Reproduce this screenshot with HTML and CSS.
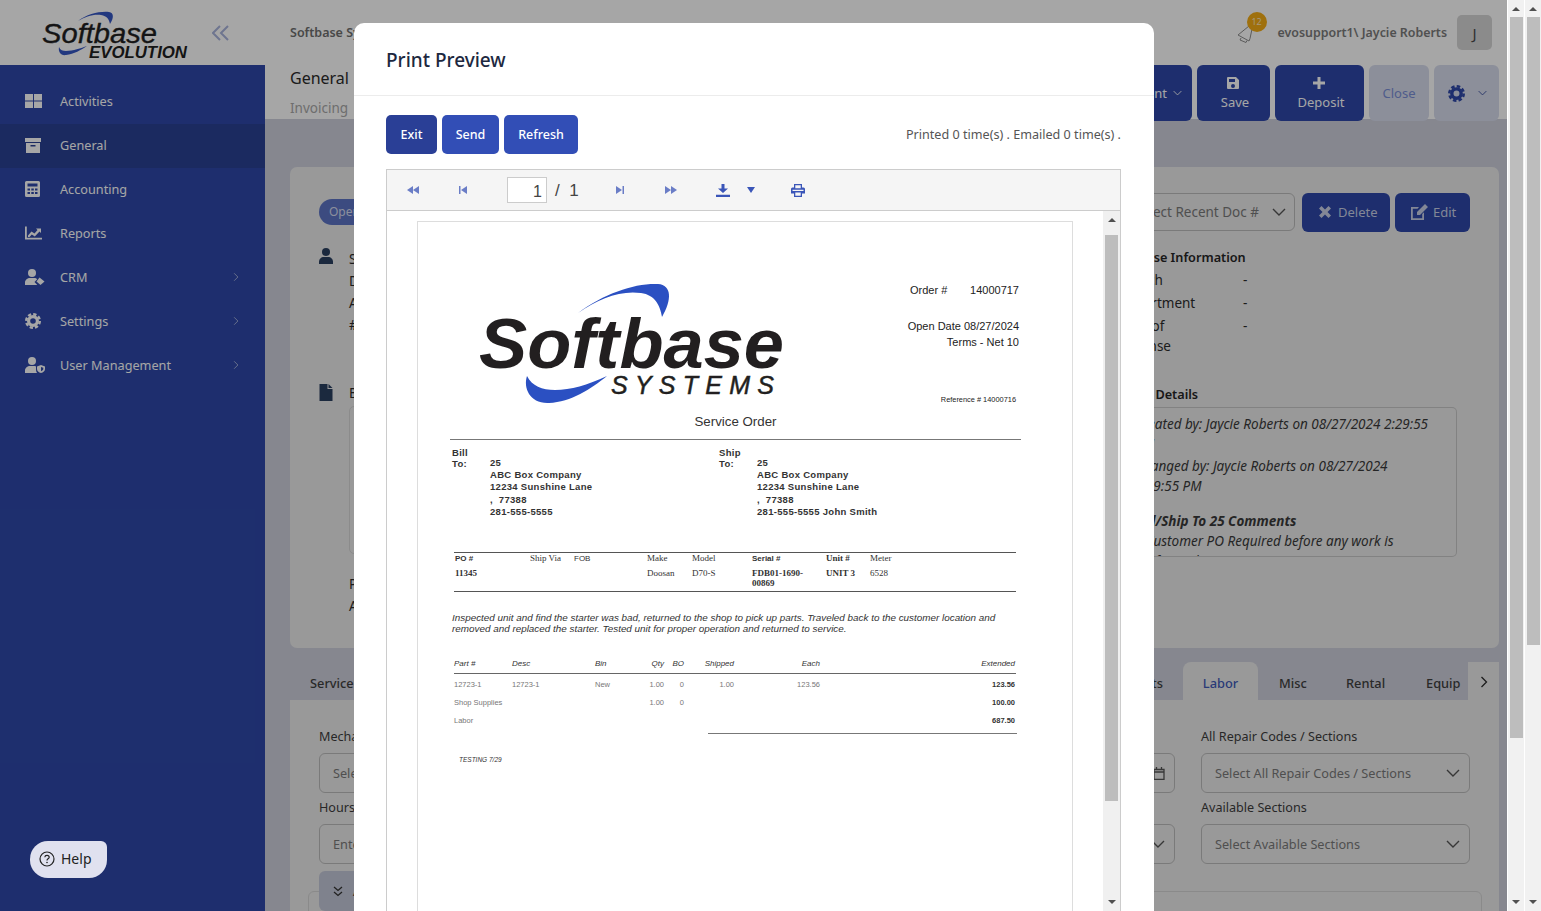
FILE: index.html
```html
<!DOCTYPE html>
<html lang="en">
<head>
<meta charset="utf-8">
<title>Softbase Evolution - Print Preview</title>
<link rel="stylesheet" href="styles.css">
</head>
<body>
<svg class="defs" aria-hidden="true">
  <defs>
    <symbol id="i-grid" viewBox="0 0 17 14"><path d="M0 0h8v6.500H0zM9 0h8v6.500H9zM0 7.500h8V14H0zM9 7.500h8V14H9z"/></symbol>
    <symbol id="i-archive" viewBox="0 0 16 15"><path d="M0 0h16v4H0zM1 5h14v10H1zM5.500 7v1.400h5V7z" fill-rule="evenodd"/></symbol>
    <symbol id="i-calc" viewBox="0 0 15 16"><path fill-rule="evenodd" d="M1.500 0h12A1.500 1.500 0 0 1 15 1.500v13a1.500 1.500 0 0 1-1.500 1.500h-12A1.500 1.500 0 0 1 0 14.500v-13A1.500 1.500 0 0 1 1.500 0zM2.500 2.500v3h10v-3zM2.500 7.500v2h2.500v-2zM6.300 7.500v2h2.500v-2zM10 7.500v2h2.500v-2zM2.500 11v2h2.500v-2zM6.300 11v2h2.500v-2zM10 11v2h2.500v-2z"/></symbol>
    <symbol id="i-chart" viewBox="0 0 17 13"><path d="M0 0h1.800v11.200H17V13H0zM3 9l3.500-4 3 2 3-3.500-1.500-1.500H16v4.500l-1.500-1.500L9.800 10 6.800 8 4.500 10.500H3z"/></symbol>
    <symbol id="i-crm" viewBox="0 0 20 16"><circle cx="7" cy="4" r="4"/><path d="M0 16v-2.500C0 11 2.500 9 5 9h4c1.500 0 2.500.5 3.200 1.300L9.500 13l2.800 3z"/><path d="M14.500 8.500l5 4-4 3.500-4-3.500z"/></symbol>
    <symbol id="i-gear" viewBox="0 0 16 16"><circle cx="8" cy="8" r="4.400" fill="none" stroke="currentColor" stroke-width="3.200"/><circle cx="8" cy="8" r="6.800" fill="none" stroke="currentColor" stroke-width="2.400" stroke-dasharray="3.300 2.040"/></symbol>
    <symbol id="i-ushield" viewBox="0 0 20 16"><circle cx="7" cy="4" r="4"/><path d="M0 16v-2.500C0 11 2.500 9 5 9h4c.8 0 1.500.2 2 .4V13c0 1.100.4 2.200 1 3z"/><path fill-rule="evenodd" d="M16 8l4 1.500V12c0 2-1.700 3.500-4 4-2.300-.5-4-2-4-4V9.500zM16 10v4.200c1.300-.4 2.300-1.200 2.300-2.200v-1.300z"/></symbol>
    <symbol id="i-chev" viewBox="0 0 8 12"><path d="M1.500 1l5 5-5 5" fill="none" stroke="currentColor" stroke-width="1.300"/></symbol>
    <symbol id="i-down" viewBox="0 0 14 8"><path d="M1 1l6 6 6-6" fill="none" stroke="currentColor" stroke-width="1.400"/></symbol>
  </defs>
</svg>

<div class="screen">
  <div class="app">
    <aside class="sidebar">
      <div class="brand">
        <svg class="brand-logo" viewBox="0 0 145 50" role="img" aria-label="Softbase Evolution">
          <path class="sw" d="M36 10C45 3 58 0 67 1c5 .6 5 6 1 12-1-5-3-8-9-9C51 3 43 6 36 10z"/>
          <path class="sw" d="M17 36c-1 5 2 9 7 8 8-1 15-5 21-9-6 2-14 5-21 5-3 0-6-1-7-4z"/>
          <text class="brand-word" x="0" y="32" textLength="115" lengthAdjust="spacingAndGlyphs">Softbase</text>
          <text class="brand-evo" x="47" y="47" textLength="98" lengthAdjust="spacingAndGlyphs">EVOLUTION</text>
        </svg>
        <svg class="collapse" viewBox="0 0 18 16"><path d="M8 1L1 8l7 7M16 1L9 8l7 7" fill="none" stroke="currentColor" stroke-width="2"/></svg>
      </div>
      <nav class="nav">
        <a class="nav-item"><svg class="nav-icon"><use href="#i-grid"/></svg><span>Activities</span></a>
        <a class="nav-item active"><svg class="nav-icon ic-archive"><use href="#i-archive"/></svg><span>General</span></a>
        <a class="nav-item"><svg class="nav-icon ic-calc"><use href="#i-calc"/></svg><span>Accounting</span></a>
        <a class="nav-item"><svg class="nav-icon"><use href="#i-chart"/></svg><span>Reports</span></a>
        <a class="nav-item"><svg class="nav-icon ic-wide"><use href="#i-crm"/></svg><span>CRM</span><svg class="nav-chev"><use href="#i-chev"/></svg></a>
        <a class="nav-item"><svg class="nav-icon ic-gear"><use href="#i-gear"/></svg><span>Settings</span><svg class="nav-chev"><use href="#i-chev"/></svg></a>
        <a class="nav-item"><svg class="nav-icon ic-wide"><use href="#i-ushield"/></svg><span>User Management</span><svg class="nav-chev"><use href="#i-chev"/></svg></a>
      </nav>
    </aside>

    <main class="main">
      <header class="topbar">
        <span class="company">Softbase Systems</span>
        <div class="user">
          <span class="bell">
            <svg class="bell-icon" viewBox="0 0 20 18"><path d="M12 1L1 10l11 6 1-2.500L15 4zM4 13l-1 2 6 2.500 1-2" fill="none" stroke="currentColor"/></svg>
            <b class="bell-count">12</b>
          </span>
          <span class="user-name">evosupport1\ Jaycie Roberts</span>
          <span class="avatar">J</span>
        </div>
      </header>
      <div class="subbar">
        <div class="crumbs"><div class="crumb-title">General</div><div class="crumb-sub">Invoicing</div></div>
        <div class="actions">
          <button class="act act-print">Print <svg class="act-chev"><use href="#i-down"/></svg></button>
          <button class="act act-save">
            <svg class="act-icon" viewBox="0 0 14 14"><path fill-rule="evenodd" d="M2 1h8l3 3v8a1 1 0 0 1-1 1H2a1 1 0 0 1-1-1V2a1 1 0 0 1 1-1zM3 3v3h6V3zM7 8a2 2 0 1 0 0 4 2 2 0 0 0 0-4z"/></svg>
            Save</button>
          <button class="act act-deposit">
            <svg class="act-icon" viewBox="0 0 14 14"><path d="M5.500 1h3v4.500H13v3H8.500V13h-3V8.500H1v-3h4.500z"/></svg>
            Deposit</button>
          <button class="act act-close">Close</button>
          <button class="act act-gear"><svg class="gear-icon"><use href="#i-gear"/></svg><svg class="act-chev"><use href="#i-down"/></svg></button>
        </div>
      </div>

      <div class="content">
        <section class="card">
          <div class="card-left">
            <span class="pill">Open</span>
            <div class="party">
              <svg class="party-icon" viewBox="0 0 14 16"><circle cx="7" cy="4" r="4"/><path d="M0 16v-2c0-3 2-5 5-5h4c3 0 5 2 5 5v2z"/></svg>
              <div class="party-text"><p>Ship To</p><p>Dept</p><p>Address</p><p>#25</p></div>
            </div>
            <div class="party party-bill">
              <svg class="party-icon file" viewBox="0 0 13 17"><path d="M0 0h8v5h5v12H0zM9 0l4 4H9z"/></svg>
              <div class="party-text"><p>Bill To</p></div>
            </div>
            <div class="bill-box"></div>
            <div class="party-text po"><p>PO</p><p>Address</p></div>
          </div>
          <div class="card-right">
            <div class="recent">
              <div class="select recent-select"><span>Select Recent Doc #</span><svg class="sel-chev"><use href="#i-down"/></svg></div>
              <button class="btn-solid btn-delete"><svg class="btn-icon" viewBox="0 0 14 14"><path d="M1 3.500L3.500 1 7 4.500 10.500 1 13 3.500 9.500 7 13 10.500 10.500 13 7 9.500 3.500 13 1 10.500 4.500 7z"/></svg>Delete</button>
              <button class="btn-solid btn-edit"><svg class="btn-icon edit" viewBox="0 0 18 16"><path d="M1 3h8L7.500 4.800H2.800v9.400h9.400V10L14 8.300V16H1zM15 0l3 3-8 8H7V8z"/></svg>Edit</button>
            </div>
            <h4 class="info-title">Expense Information</h4>
            <dl class="info">
              <dt>Branch</dt><dd>-</dd>
              <dt>Department</dt><dd>-</dd>
              <dt>Type of<br>Expense</dt><dd>-</dd>
            </dl>
            <h4 class="info-title details-title">Order Details</h4>
            <div class="details">
              <p class="d-first">Created by: Jaycie Roberts on 08/27/2024 2:29:55<br>PM</p>
              <p>Changed by: Jaycie Roberts on 08/27/2024<br>2:29:55 PM</p>
              <p><b>Bill/Ship To 25 Comments</b><br>&nbsp;&nbsp;&nbsp;Customer PO Required before any work is<br>performed</p>
            </div>
          </div>
        </section>

        <div class="tabs">
          <span class="tab tab-service">Service</span>
          <span class="tab tab-parts">Parts</span>
          <span class="tab tab-active">Labor</span>
          <span class="tab tab-misc">Misc</span>
          <span class="tab tab-rental">Rental</span>
          <span class="tab tab-equip">Equip</span>
          <span class="tab-next"><svg class="tab-next-icon"><use href="#i-chev"/></svg></span>
        </div>
        <section class="panel">
          <div class="form-grid">
            <label class="field"><span>Mechanic</span><div class="select"><span>Select Mechanic</span></div></label>
            <label class="field"><span>Date</span><div class="select select-date"><span>Select Date</span>
              <svg class="cal" viewBox="0 0 12 13"><path d="M1 2.500h10v10H1zM1 5h10M3.500 0v3M8.500 0v3" fill="none" stroke="currentColor" stroke-width="1.300"/></svg></div></label>
            <label class="field"><span>All Repair Codes / Sections</span><div class="select"><span>Select All Repair Codes / Sections</span><svg class="sel-chev"><use href="#i-down"/></svg></div></label>
            <label class="field"><span>Hours</span><div class="select"><span>Enter Hours</span></div></label>
            <label class="field"><span>Rate</span><div class="select"><span>Select Rate</span><svg class="sel-chev"><use href="#i-down"/></svg></div></label>
            <label class="field"><span>Available Sections</span><div class="select"><span>Select Available Sections</span><svg class="sel-chev"><use href="#i-down"/></svg></div></label>
          </div>
          <div class="accordion">
            <div class="acc-box"></div>
            <div class="acc-chip"><svg class="acc-icon" viewBox="0 0 10 11"><path d="M1 1l4 3.500L9 1M1 6l4 3.500L9 6" fill="none" stroke="currentColor" stroke-width="1.300"/></svg><span>Add</span></div>
          </div>
        </section>
      </div>
    </main>

    <div class="backdrop"></div>

    <button class="help">
      <svg class="help-icon" viewBox="0 0 16 16"><circle cx="8" cy="8" r="7" fill="none" stroke="currentColor" stroke-width="1.200"/><path d="M5.800 6.200C5.900 4.900 6.900 4.300 8 4.300c1.200 0 2.200.8 2.200 1.900 0 1.600-2.200 1.600-2.200 3.200" fill="none" stroke="currentColor" stroke-width="1.200"/><circle cx="8" cy="11.500" r=".8" fill="currentColor"/></svg>
      Help
    </button>

    <div class="modal" role="dialog" aria-label="Print Preview">
      <div class="modal-head"><h2 class="modal-title">Print Preview</h2></div>
      <div class="modal-body">
        <div class="modal-actions">
          <button class="m-btn m-exit">Exit</button>
          <button class="m-btn m-send">Send</button>
          <button class="m-btn m-refresh">Refresh</button>
          <span class="print-count">Printed 0 time(s) . Emailed 0 time(s) .</span>
        </div>
        <div class="viewer">
          <div class="toolbar">
            <svg class="tb-icon" viewBox="0 0 12 8"><path d="M6 0v8L0 4zM12 0v8L6 4z"/></svg>
            <svg class="tb-icon small" viewBox="0 0 8 8"><path d="M0 0h1.500v8H0zM8 0v8L2 4z"/></svg>
            <input class="page-input" value="1" aria-label="Page">
            <span class="page-total">/&nbsp;&nbsp;1</span>
            <svg class="tb-icon small" viewBox="0 0 8 8"><path d="M0 0v8l6-4zM6.500 0H8v8H6.500z"/></svg>
            <svg class="tb-icon" viewBox="0 0 12 8"><path d="M0 0v8l6-4zM6 0v8l6-4z"/></svg>
            <svg class="tb-dl" viewBox="0 0 14 13"><path d="M5.500 0h3v4.500H12L7 9 2 4.500h3.500zM0 10.800h14V13H0z"/></svg>
            <svg class="tb-caret" viewBox="0 0 8 6"><path d="M0 0h8L4 6z"/></svg>
            <svg class="tb-print" viewBox="0 0 14 13"><path fill-rule="evenodd" d="M3 0h8v3.500h1.500A1.500 1.500 0 0 1 14 5v4.500h-3V13H3V9.500H0V5a1.500 1.500 0 0 1 1.500-1.500H3zM4.300 1.300v3h5.400v-3zM1.500 5.800v1.200h11V5.800zM4.300 8.500v3.300h5.400V8.500z"/></svg>
          </div>
          <div class="viewer-body">
            <article class="doc">
              <div class="doc-head">
                <svg class="doc-logo" viewBox="0 0 303 124" role="img" aria-label="Softbase Systems">
                  <path class="doc-sw" d="M98 29C125 9 155-1 178 0c14 1 14 16 4 33-2-12-7-22-21-24C140 6 118 15 98 29z"/>
                  <path class="doc-sw" d="M47 92c-4 12 3 28 22 27 22-1 42-14 58-27-20 9-36 14-52 14-13 0-23-4-28-14z"/>
                  <text class="doc-word" x="-1" y="84" textLength="305" lengthAdjust="spacingAndGlyphs">Softbase</text>
                  <text class="doc-systems" x="131" y="110" textLength="163" lengthAdjust="spacing">SYSTEMS</text>
                </svg>
                <div class="doc-meta">
                  <div class="meta-order"><span>Order #</span><span>14000717</span></div>
                  <div class="meta-open">Open Date 08/27/2024</div>
                  <div class="meta-terms">Terms - Net 10</div>
                  <div class="meta-ref">Reference # 14000716</div>
                </div>
              </div>
              <h3 class="doc-title">Service Order</h3>
              <div class="addr-row">
                <div class="addr">
                  <div class="addr-label">Bill To:</div>
                  <div class="addr-lines">25<br>ABC Box Company<br>12234 Sunshine Lane<br>,&nbsp; 77388<br>281-555-5555</div>
                </div>
                <div class="addr">
                  <div class="addr-label">Ship To:</div>
                  <div class="addr-lines">25<br>ABC Box Company<br>12234 Sunshine Lane<br>,&nbsp; 77388<br>281-555-5555 John Smith</div>
                </div>
              </div>
              <div class="unit-table">
                <span class="u-sans">PO #</span><span class="u-serif">Ship Via</span><span class="u-sans u-light">FOB</span><span class="u-serif">Make</span><span class="u-serif">Model</span><span class="u-sans">Serial #</span><span class="u-serif u-bold">Unit #</span><span class="u-serif">Meter</span>
                <span class="u-serif u-bold">11345</span><span></span><span></span><span class="u-serif">Doosan</span><span class="u-serif">D70-S</span><span class="u-serif u-bold">FDB01-1690-<br>00869</span><span class="u-serif u-bold">UNIT 3</span><span class="u-serif">6528</span>
              </div>
              <p class="doc-note">Inspected unit and find the starter was bad, returned to the shop to pick up parts. Traveled back to the customer location and<br>removed and replaced the starter. Tested unit for proper operation and returned to service.</p>
              <div class="parts">
                <div class="parts-row parts-head"><span>Part #</span><span>Desc</span><span>Bin</span><span class="r">Qty</span><span class="r">BO</span><span class="r">Shipped</span><span class="r">Each</span><span class="r">Extended</span></div>
                <div class="parts-row"><span>12723-1</span><span>12723-1</span><span>New</span><span class="r">1.00</span><span class="r">0</span><span class="r">1.00</span><span class="r">123.56</span><b class="r">123.56</b></div>
                <div class="parts-row"><span class="wide">Shop Supplies</span><span class="r">1.00</span><span class="r">0</span><span></span><span></span><b class="r">100.00</b></div>
                <div class="parts-row"><span class="wide">Labor</span><span></span><span></span><span></span><span></span><b class="r">687.50</b></div>
              </div>
              <div class="parts-total"></div>
              <p class="doc-foot">TESTING 7/29</p>
            </article>
            <div class="v-scroll"><span class="arrow up"></span><span class="v-thumb"></span><span class="arrow down"></span></div>
          </div>
        </div>
      </div>
    </div>
  </div>

  <div class="sbar"><span class="arrow up"></span><span class="sbar-thumb t1"></span><span class="arrow down"></span></div>
  <div class="sbar"><span class="arrow up"></span><span class="sbar-thumb t2"></span><span class="arrow down"></span></div>
</div>
</body>
</html>
```
FILE: styles.css
```css
* { box-sizing: border-box; }
html, body { margin: 0; height: 100%; overflow: hidden; }
body { font-family: "Noto Sans", "Open Sans", sans-serif; font-size: 13px; color: #1f2937; background: #fff; }
p, h2, h3, h4, dl, dd { margin: 0; }
button { font: inherit; border: 0; cursor: pointer; }
.defs { width: 0; height: 0; display: block; overflow: hidden; }
svg { display: block; fill: currentColor; }

.screen { display: flex; width: 1541px; height: 911px; }
.app { position: relative; display: flex; width: 1507px; height: 911px; overflow: hidden; }

/* scrollbars */
.sbar { width: 17px; height: 911px; background: #f1f1f1; border-left: 1px solid #fff; display: flex; flex-direction: column; align-items: center; }
.sbar-thumb { width: 13px; background: #bdbdbd; margin-top: 17px; }
.t1 { height: 721px; }
.t2 { height: 628px; }
.arrow { display: block; width: 0; height: 0; border-left: 4px solid transparent; border-right: 4px solid transparent; }
.arrow.up { border-bottom: 4px solid #505050; margin-top: 7px; margin-bottom: -11px; }
.arrow.down { border-top: 4px solid #505050; margin-top: auto; margin-bottom: 7px; }

/* sidebar */
.sidebar { width: 265px; flex: none; background: #2e48a9; color: #fff; }
.brand { height: 65px; background: #fff; display: flex; align-items: flex-start; padding: 11px 0 0 42px; }
.brand-logo { width: 145px; height: 50px; overflow: visible; flex: none; }
.sw { fill: #3556c4; }
.brand-word { font: italic 400 27px "Liberation Sans", sans-serif; fill: #1f1f22; stroke: #1f1f22; stroke-width: .35px; }
.brand-evo { font: italic 700 16px "Liberation Sans", sans-serif; fill: #1f1f22; }
.collapse { width: 18px; height: 16px; margin: 14px 0 0 25px; color: #a9b4dc; }
.nav { padding-top: 15px; }
.nav-item { display: flex; align-items: center; height: 44px; padding: 0 25px 2px; font-size: 12.700px; }
.nav-item.active { background: #2a4194; }
.nav-icon { width: 17px; height: 14px; margin-right: 18px; flex: none; }
.ic-archive { width: 16px; height: 15px; margin-right: 19px; }
.ic-calc { width: 15px; height: 16px; margin-right: 20px; }
.ic-gear { width: 16px; height: 16px; margin-right: 19px; }
.ic-wide { width: 20px; height: 16px; margin-right: 15px; }
.nav-chev { width: 6px; height: 10px; margin-left: auto; margin-right: 1px; opacity: .55; }

/* main */
.main { flex: 1; min-width: 0; background: #ced0dc; display: flex; flex-direction: column; }
.topbar { height: 65px; background: #fff; display: flex; align-items: center; padding: 0 15px 0 25px; }
.company { font-size: 12.500px; font-weight: 600; color: #6f6f6f; }
.user { margin-left: auto; display: flex; align-items: center; }
.bell { position: relative; display: block; width: 20px; height: 18px; margin: 3px 21px 0 0; color: #8d8d8d; }
.bell-icon { width: 20px; height: 18px; fill: none; }
.bell-count { position: absolute; top: -13px; left: 10px; width: 20px; height: 20px; border-radius: 50%; background: #f4ac14; color: #ffe9c0; font-size: 9px; font-weight: 400; line-height: 20px; text-align: center; }
.user-name { font-size: 12.400px; font-weight: 600; color: #7c7c7c; }
.avatar { width: 35px; height: 35px; margin-left: 10px; background: #d6d6d6; border-radius: 5px; display: flex; align-items: center; justify-content: center; font-size: 15px; color: #4a4a4a; }

.subbar { height: 54px; background: #fff; display: flex; justify-content: space-between; padding: 0 8px 0 25px; }
.crumb-title { font-size: 16px; line-height: 26px; color: #2b2b2b; }
.crumb-sub { font-size: 13.500px; line-height: 20px; margin-top: 7px; color: #a9a9a9; }
.actions { display: flex; gap: 5px; height: 56px; }
.act { background: #2e48a9; color: #fff; border-radius: 6px; font-size: 13px; display: flex; flex-direction: column; align-items: center; justify-content: center; padding: 0; }
.act-print { width: 80px; flex-direction: row; justify-content: flex-end; padding-right: 10px; gap: 6px; }
.act-save { width: 73px; padding-left: 3px; }
.act-deposit { width: 89px; padding-left: 3px; }
.act-save .act-icon, .act-deposit .act-icon { margin-left: -5px; }
.act-close { width: 60px; background: #d7dced; color: #7a8ed6; }
.act-gear { width: 65px; background: #d7dced; color: #2e48a9; flex-direction: row; gap: 13px; padding-left: 1px; }
.act-icon { width: 14px; height: 14px; margin-bottom: 3px; }
.act-chev { width: 9px; height: 6px; fill: none; }
.act-gear .act-chev { color: #3a4f9e; }
.gear-icon { width: 17px; height: 17px; }

.content { padding: 48px 8px 0 25px; flex: 1; min-height: 0; display: flex; flex-direction: column; }

.card { height: 481px; background: #ebebeb; border-radius: 7px; display: flex; justify-content: space-between; padding: 26px 29px 0; }
.card-left { width: 400px; }
.pill { display: block; width: 70px; height: 26px; margin-top: 6px; padding: 0 14px 0 10px; border-radius: 13px; background: #5d74c5; color: #d7dcf0; font-size: 12px; line-height: 26px; }
.party { display: flex; gap: 16px; margin-top: 23px; }
.party-icon { width: 14px; height: 16px; color: #2a3f60; flex: none; }
.party-icon.file { height: 17px; color: #2a3f60; }
.party-text p { font-size: 13.500px; line-height: 22px; color: #2b2b2b; }
.party-bill { margin-top: 48px; }
.party-bill .party-text { margin-top: -2px; }
.bill-box { width: 300px; height: 148px; margin: 2px 0 0 30px; border: 1px solid #d6d6d6; border-radius: 5px; }
.po { margin: 19px 0 0 30px; }

.card-right { width: 354px; }
.recent { display: flex; gap: 5px; }
.select { height: 40px; border: 1px solid #bcbcbc; border-radius: 6px; display: flex; align-items: center; justify-content: space-between; padding: 0 9px 0 13px; color: #7a7a7a; font-size: 12.700px; white-space: nowrap; overflow: hidden; }
.sel-chev { width: 14px; height: 8px; color: #555; fill: none; flex: none; }
.recent-select { width: 179px; height: 38px; flex: none; margin-right: 2px; padding-left: 0; padding-right: 8px; justify-content: flex-end; gap: 13px; font-size: 13.500px; }
.btn-solid { height: 39px; background: #2e48a9; color: #c9cfe6; border-radius: 6px; display: flex; align-items: center; padding: 0 0 2px 16px; font-size: 13px; gap: 6px; flex: none; }
.btn-delete { width: 88px; }
.btn-edit { width: 75px; gap: 5px; }
.btn-icon { width: 14px; height: 14px; }
.btn-icon.edit { width: 18px; height: 16px; margin-left: -1px; }
.info-title { font-size: 12.700px; line-height: 20px; font-weight: 600; color: #262626; margin-top: 15px; }
.info { display: grid; grid-template-columns: 125px 1fr; font-size: 13.500px; line-height: 20px; color: #2b2b2b; margin: 3px 0 0 2px; row-gap: 3px; }
.details-title { margin-top: 28px; }
.details { width: 357px; height: 150px; margin: 3px 0 0 -16px; padding: 6px 12px 0 35px; border: 1px solid #c8c8c8; border-left: 0; border-radius: 5px; overflow: hidden; font-size: 13.500px; line-height: 20px; font-style: italic; color: #3a3a3a; white-space: nowrap; }
.details p { margin-bottom: 15px; }
.details .d-first { margin-bottom: 2px; }

.tabs { display: flex; height: 38px; margin-top: 14px; align-items: stretch; flex: none; }
.tab { flex: none; display: flex; align-items: center; padding: 4px 0 0 20px; font-size: 12.800px; font-weight: 500; color: #3f3f3f; }
.tab-parts { margin-left: auto; padding-right: 20px; }
.tab-active { width: 75px; padding: 4px 0 0; justify-content: center; background: #ebebeb; color: #3f5ab8; border-radius: 8px 8px 0 0; }
.tab-misc { width: 68px; padding-left: 21px; }
.tab-rental { width: 80px; }
.tab-equip { width: 62px; }
.tab-next { width: 31px; flex: none; background: #ebebeb; display: flex; align-items: center; justify-content: center; padding-top: 2px; color: #2b2b2b; }
.tab-next-icon { width: 8px; height: 12px; }

.panel { flex: 1; min-height: 0; background: #ebebeb; padding: 28px 29px 0; }
.form-grid { display: grid; grid-template-columns: 1fr 1fr 269px; column-gap: 26px; row-gap: 6px; }
.field { display: flex; flex-direction: column; gap: 7px; font-size: 12.600px; line-height: 18px; color: #3d3d3d; }
.cal { width: 12px; height: 13px; color: #555; }
.accordion { display: grid; margin: 7px -12px 0 -11px; }
.acc-box { grid-area: 1 / 1; margin-top: 20px; height: 60px; border: 1px solid #d5d5d5; border-radius: 6px; }
.acc-chip { grid-area: 1 / 1; justify-self: start; margin-left: 11px; width: 300px; height: 40px; background: #c4c8d9; border-radius: 6px; display: flex; align-items: center; padding-left: 14px; gap: 10px; color: #333; }
.acc-icon { width: 10px; height: 11px; fill: none; }

/* overlay */
.backdrop { position: absolute; inset: 0; background: rgba(0, 0, 0, .35); }
.help { position: absolute; left: 30px; top: 841px; width: 77px; height: 37px; background: #e0e1ef; color: #222; border-radius: 18px 6px 18px 18px; display: flex; align-items: center; padding: 0 0 2px 9px; gap: 6px; font-size: 14px; }
.help-icon { width: 16px; height: 16px; }

.modal { position: absolute; left: 354px; top: 23px; width: 800px; height: 920px; background: #fff; border-radius: 10px; overflow: hidden; }
.modal-head { height: 73px; border-bottom: 1px solid #ececec; padding: 2px 32px 0; display: flex; align-items: center; }
.modal-title { font-size: 19px; font-weight: 500; color: #1d2840; }
.modal-body { padding: 19px 33px 0 32px; }
.modal-actions { display: flex; gap: 5px; align-items: center; height: 39px; }
.m-btn { height: 39px; padding: 0 0 1px; background: #324eb6; color: #fff; border-radius: 5px; font-size: 12.500px; font-weight: 500; }
.m-exit { width: 51px; background: #2a3f96; }
.m-send { width: 57px; }
.m-refresh { width: 74px; }
.print-count { margin-left: auto; font-size: 12.600px; color: #555; }

.viewer { margin-top: 15px; border: 1px solid #ccc; }
.toolbar { height: 41px; background: #f5f5f5; border-bottom: 1px solid #ccc; display: grid; grid-template-columns: 52px 48px 60px 50px 46px 56px 48px 8px 86px; align-items: center; justify-items: center; color: #6a7dc6; }
.tb-icon { width: 12px; height: 8px; }
.tb-icon.small { width: 8px; height: 8px; }
.page-input { justify-self: end; width: 40px; height: 26px; border: 1px solid #ccc; background: #fff; text-align: right; padding: 3px 4px 0; font: 16px "Liberation Sans", sans-serif; color: #444; }
.page-total { justify-self: start; padding: 1px 0 0 8px; font: 17px "Liberation Sans", sans-serif; color: #444; white-space: nowrap; }
.tb-dl { width: 14px; height: 13px; color: #3a55b8; }
.tb-caret { width: 8px; height: 6px; color: #3a55b8; }
.tb-print { width: 14px; height: 13px; color: #3a55b8; }

.viewer-body { display: flex; padding: 10px 0 0 30px; }
.doc { width: 656px; height: 720px; flex: none; border: 1px solid #ddd; color: #222; font-family: "Liberation Sans", sans-serif; }
.v-scroll { width: 17px; height: 700px; margin: -10px 0 0 30px; background: #f0f0f0; display: flex; flex-direction: column; align-items: center; }
.v-thumb { width: 13px; height: 566px; margin-top: 24px; background: #bdbdbd; }

.doc-head { display: flex; justify-content: space-between; height: 124px; margin: 62px 53px 0 62px; }
.doc-logo { width: 303px; height: 124px; overflow: visible; flex: none; }
.doc-sw { fill: #2b50c2; }
.doc-word { font: italic 700 70px "Liberation Sans", sans-serif; fill: #221f20; }
.doc-systems { font: italic 400 25px "Liberation Sans", sans-serif; fill: #221f20; stroke: #221f20; stroke-width: .5px; }
.doc-meta { width: 112px; flex: none; text-align: right; font-size: 11px; line-height: 12px; color: #222; white-space: nowrap; }
.meta-order { display: flex; justify-content: space-between; margin-left: 3px; }
.meta-open { margin-top: 24px; }
.meta-terms { margin-top: 4px; }
.meta-ref { margin-top: 47px; margin-right: 3px; font-size: 7.400px; line-height: 10px; }
.doc-title { height: 26px; margin: 6px 51px 0 32px; border-bottom: 1.500px solid #777; text-align: center; font-size: 13.300px; line-height: 16px; font-weight: 400; color: #333; }
.addr-row { display: grid; grid-template-columns: 267px 1fr; margin: 7px 0 0 34px; height: 73px; font-size: 9.500px; letter-spacing: .3px; color: #222; }
.addr { display: flex; }
.addr-label { width: 38px; flex: none; line-height: 11px; font-weight: 700; color: #333; padding-right: 12px; }
.addr-lines { margin-top: 10px; font-weight: 700; color: #333; line-height: 12.200px; white-space: nowrap; }

.unit-table { margin: 32px 0 0 36px; width: 562px; height: 40px; border-top: 1px solid #555; border-bottom: 1.500px solid #555; display: grid; grid-template-columns: 75px 44px 73px 45px 60px 74px 44px 1fr; grid-template-rows: 15px 1fr; padding: 0 0 0 1px; line-height: 10px; color: #333; }
.u-sans { font: 700 8px/12px "Liberation Sans", sans-serif; }
.u-light { font-weight: 400; }
.u-serif { font: 400 9px/10px "Liberation Serif", serif; }
.u-bold { font-weight: 700; }
.doc-note { margin: 20px 0 0 34px; font-size: 9.900px; line-height: 11px; font-style: italic; color: #333; white-space: nowrap; }
.parts { margin: 25px 0 0 36px; width: 562px; color: #777; font-size: 7.500px; }
.parts-row { display: grid; grid-template-columns: 58px 83px 22px 47px 20px 50px 86px 1fr; height: 18px; align-items: center; padding-right: 1px; }
.parts-row > span, .parts-row > b { white-space: nowrap; }
.parts-row b { color: #333; }
.parts-head { height: 15px; border-bottom: 1.500px solid #666; color: #333; font-style: italic; font-size: 8px; align-items: start; margin-bottom: 1px; }
.wide { grid-column: span 3; }
.r { text-align: right; }
.parts-total { margin: 4px 0 0 290px; width: 309px; border-top: 1.500px solid #777; }
.doc-foot { margin: 22px 0 0 41px; font-size: 6.500px; font-style: italic; color: #333; }
```
